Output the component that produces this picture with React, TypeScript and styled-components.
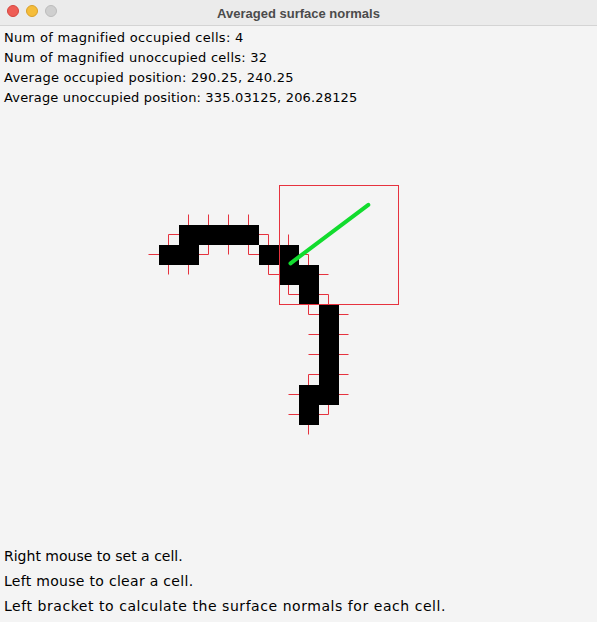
import React from "react";
import styled, { createGlobalStyle } from "styled-components";

const Global = createGlobalStyle`
  html, body { margin: 0; padding: 0; background: #f4f4f4; }
  body { width: 597px; height: 622px; overflow: hidden; }
`;

const Window = styled.div`
  width: 597px;
  height: 622px;
  display: flex;
  flex-direction: column;
  background: #f4f4f4;
  overflow: hidden;
`;

const TitleBar = styled.div`
  position: relative;
  height: 25px;
  flex: none;
  background: #ebebeb;
  border-bottom: 1px solid #d4d4d4;
  display: flex;
  align-items: center;
  justify-content: center;
`;

const Lights = styled.div`
  position: absolute;
  left: 7px;
  top: 5px;
  display: flex;
  gap: 7px;
`;

const Light = styled.span<{ $fill: string; $edge: string }>`
  width: 12px;
  height: 12px;
  border-radius: 50%;
  box-sizing: border-box;
  background: ${(p) => p.$fill};
  border: 1px solid ${(p) => p.$edge};
`;

const Title = styled.div`
  font-family: "Liberation Sans", Arial, sans-serif;
  font-weight: 700;
  font-size: 13px;
  color: #4b4b4b;
  margin-top: 1px;
`;

const Content = styled.div`
  flex: 1;
  display: flex;
  flex-direction: column;
`;

const TextBlock = styled.div<{ $size: number; $lh: number; $pt: number; $pb: number }>`
  font-family: "DejaVu Sans", sans-serif;
  font-size: ${(p) => p.$size}px;
  color: #000;
  line-height: ${(p) => p.$lh}px;
  padding: ${(p) => p.$pt}px 0 ${(p) => p.$pb}px 4px;
  white-space: nowrap;
`;

const Line = styled.div<{ $ls?: number }>`
  letter-spacing: ${(p) => p.$ls ?? 0}px;
`;

const Canvas = styled.svg`
  display: block;
  flex: none;
  width: 597px;
  height: 436px;
`;

const CELL = 20;
const OX = 159;
const OY = 225;
const cells: [number, number][] = [
  [0, 1], [0, 2], [0, 3], [0, 4],
  [1, 0], [1, 1], [1, 5], [1, 6],
  [2, 6], [2, 7],
  [3, 7],
  [4, 8], [5, 8], [6, 8], [7, 8],
  [8, 7], [8, 8],
  [9, 7],
];
const occupied = new Set(cells.map(([r, c]) => `${r},${c}`));
const dirs: [number, number][] = [[-1, 0], [1, 0], [0, -1], [0, 1]];

const normals: { x1: number; y1: number; x2: number; y2: number }[] = [];
cells.forEach(([r, c]) => {
  const cx = OX + c * CELL + 9.5;
  const cy = OY + r * CELL + 9.5;
  dirs.forEach(([dr, dc]) => {
    if (!occupied.has(`${r + dr},${c + dc}`)) {
      normals.push({ x1: cx, y1: cy, x2: cx + dc * 20, y2: cy + dr * 20 });
    }
  });
});

const RED = "#e6323e";

export default function App() {
  return (
    <>
      <Global />
      <Window>
        <TitleBar>
          <Lights>
            <Light $fill="#ee5d55" $edge="#d5463f" />
            <Light $fill="#f5bd3a" $edge="#d9a02a" />
            <Light $fill="#cfcfcf" $edge="#bcbcbc" />
          </Lights>
          <Title>Averaged surface normals</Title>
        </TitleBar>
        <Content>
          <TextBlock $size={13} $lh={20} $pt={2} $pb={0}>
            <Line $ls={0.3}>Num of magnified occupied cells: 4</Line>
            <Line $ls={0.25}>Num of magnified unoccupied cells: 32</Line>
            <Line $ls={0.25}>Average occupied position: 290.25, 240.25</Line>
            <Line $ls={0.16}>Average unoccupied position: 335.03125, 206.28125</Line>
          </TextBlock>
          <Canvas viewBox="0 108 597 436">
            {normals.map((n, i) => (
              <line key={i} x1={n.x1} y1={n.y1} x2={n.x2} y2={n.y2} stroke={RED} strokeWidth={1} />
            ))}
            {cells.map(([r, c]) => (
              <rect key={`${r}-${c}`} x={OX + c * CELL} y={OY + r * CELL} width={CELL} height={CELL} fill="#000" />
            ))}
            <rect x={279.5} y={185.5} width={119} height={119} fill="none" stroke={RED} strokeWidth={1} />
            <line x1={290.5} y1={263.3} x2={368.3} y2={204.8} stroke="#12dc2e" strokeWidth={4} strokeLinecap="round" />
          </Canvas>
          <TextBlock $size={14} $lh={25} $pt={0} $pb={3}>
            <Line $ls={0}>Right mouse to set a cell.</Line>
            <Line $ls={0.3}>Left mouse to clear a cell.</Line>
            <Line $ls={0.55}>Left bracket to calculate the surface normals for each cell.</Line>
          </TextBlock>
        </Content>
      </Window>
    </>
  );
}
